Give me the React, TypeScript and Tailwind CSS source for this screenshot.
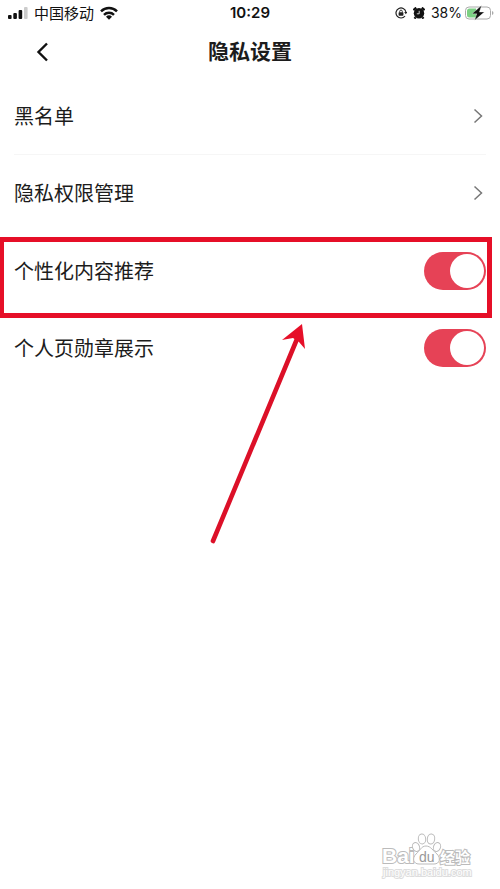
import { useState } from "react";

const FONT = "font-['Liberation_Sans','Noto_Sans_CJK_SC',sans-serif]";

function StatusBar() {
  return (
    <div className="grid h-[26px] grid-cols-[1fr_auto_1fr] items-center px-1.5 text-[#111]">
      <div className="flex items-center gap-1.5 pl-0.5">
        <svg className="h-3 w-5 shrink-0" viewBox="0 0 20 12">
          <rect x="0" y="8" width="3.6" height="4" rx="1" fill="#111" />
          <rect x="5.3" y="6" width="3.6" height="6" rx="1" fill="#111" />
          <rect x="10.6" y="3" width="3.6" height="9" rx="1" fill="#111" />
          <rect x="16" y="0" width="3.6" height="12" rx="1" fill="#ccc" />
        </svg>
        <span className="whitespace-nowrap pt-0.5 text-[15px] leading-5">中国移动</span>
        <svg className="h-3.5 w-[18px] shrink-0" viewBox="0 0 18 14">
          <g fill="none" stroke="#111" strokeWidth="2.5">
            <path d="M1 5.3a11.5 11.5 0 0 1 16 0" />
            <path d="M4 8.8a7.2 7.2 0 0 1 10 0" />
          </g>
          <path d="M6 10.7a4.3 4.3 0 0 1 6 0L9 13.7z" fill="#111" />
        </svg>
      </div>
      <span className="text-center font-['Inter',sans-serif] text-[15px] font-semibold leading-5">10:29</span>
      <div className="flex items-center justify-end gap-1.5">
        <svg className="h-3 w-3 shrink-0" viewBox="0 0 12 12">
          <path d="M10.9 5A5 5 0 1 0 10 9" fill="none" stroke="#222" strokeWidth="1.2" />
          <path d="M9.2 5h3.2l-1.6 2.3z" fill="#222" />
          <rect x="3.6" y="5.3" width="4.8" height="3.4" rx=".6" fill="#222" />
          <path d="M4.7 5.5V4.4a1.3 1.3 0 0 1 2.6 0v1.1" fill="none" stroke="#222" strokeWidth=".9" />
        </svg>
        <svg className="h-3 w-3 shrink-0" viewBox="0 0 12 12">
          <circle cx="6" cy="6.3" r="5.2" fill="#111" />
          <path d="M.4 3.2 3.2.6M11.6 3.2 8.8.6M2.6 10.2 1.5 11.6M9.4 10.2l1.1 1.4" stroke="#111" strokeWidth="2.2" />
          <path d="M6.2 3.8v3H3.8" fill="none" stroke="#fff" strokeWidth=".8" />
        </svg>
        <div className="flex items-center gap-0.5">
          <span className="font-['Inter',sans-serif] text-sm leading-5">38%</span>
          <svg className="h-4 w-[30px] shrink-0" viewBox="0 0 30 16">
            <rect x="1.5" y="2" width="25" height="12" rx="3.5" fill="#fff" stroke="#aaa" />
            <path d="M5.5 3.5H12v9H5.5a2.5 2.5 0 0 1-2.5-2.5V6a2.5 2.5 0 0 1 2.5-2.5z" fill="#7bd083" />
            <path d="M28 6v4q1.5-.6 1.5-2T28 6z" fill="#aaa" />
            <path d="M17.5.5 8 8.8h4.7l-2 6.5 9.6-8.2h-4.9z" fill="#111" stroke="#fff" strokeWidth=".3" />
          </svg>
        </div>
      </div>
    </div>
  );
}

function LinkRow({ label, divider }: { label: string; divider?: boolean }) {
  return (
    <li className="px-3.5">
      <a
        href="#"
        className={`flex h-[77px] items-center justify-between border-b ${divider ? "border-[#f6f6f6]" : "border-transparent"}`}
      >
        <span className="pt-0.5 text-xl">{label}</span>
        <svg className="mr-0.5 h-4 w-3" viewBox="0 0 12 16" fill="none" stroke="#777" strokeWidth="1.5">
          <path d="M2.5 1.5 9.5 8l-7 6.5" />
        </svg>
      </a>
    </li>
  );
}

function ToggleRow({ label, highlighted }: { label: string; highlighted?: boolean }) {
  const [on, setOn] = useState(true);

  return (
    <li className="relative">
      <label className="flex h-[77px] cursor-pointer items-center justify-between px-3.5">
        <span className="pt-0.5 text-xl">{label}</span>
        <input
          type="checkbox"
          role="switch"
          checked={on}
          onChange={(e) => setOn(e.target.checked)}
          className="peer sr-only"
        />
        <span className="flex h-[38px] w-[62px] items-center rounded-full bg-[#c9c9c9] px-0.5 peer-checked:justify-end peer-checked:bg-[#e64256]">
          <span className="h-[34px] w-[34px] rounded-full bg-white" />
        </span>
      </label>
      {highlighted && (
        <>
          <div className="pointer-events-none absolute -bottom-[9px] left-0 right-2 top-[5px] border-[5px] border-l-4 border-[#e60f28]" />
          <svg
            className="pointer-events-none absolute left-[42%] top-[92px] z-10 h-[222px] w-[100px]"
            viewBox="0 0 100 222"
          >
            <path d="M3 217 87 15" stroke="#dc1028" strokeWidth="4.6" strokeLinecap="round" />
            <path d="M92 0 95 25 89 18 83 14 72 16z" fill="#e60f28" />
          </svg>
        </>
      )}
    </li>
  );
}

function Watermark() {
  return (
    <svg
      className="h-[50px] w-24"
      viewBox="0 0 96 50"
      fill="#fff"
      stroke="#bbb"
      strokeWidth="1"
      fontFamily="Liberation Sans, Noto Sans CJK SC, sans-serif"
    >
      <text x="2" y="32" fontSize="21" fontWeight="bold" paintOrder="stroke" strokeWidth="2">Bai</text>
      <ellipse cx="36" cy="16" rx="3.5" ry="4.6" transform="rotate(-20 36 16)" />
      <ellipse cx="42" cy="8" rx="3.7" ry="5" transform="rotate(-5 42 8)" />
      <ellipse cx="51" cy="8" rx="3.7" ry="5" transform="rotate(8 51 8)" />
      <ellipse cx="57" cy="16" rx="3.5" ry="4.6" transform="rotate(20 57 16)" />
      <path d="M46 15c-5 0-6 5-10 8-4 4-3 10 3 10h15c6 0 7-6 3-10-4-3-6-8-11-8z" />
      <text x="39" y="31" fontSize="14" fill="#999" stroke="none">du</text>
      <text x="60" y="32" fontSize="15" fontWeight="bold" paintOrder="stroke" strokeWidth="2">经验</text>
      <text x="3" y="45" fontSize="11" paintOrder="stroke" stroke="#ddd" strokeWidth="2">
        jingyan.baidu.com
      </text>
    </svg>
  );
}

export default function App() {
  return (
    <div className={`flex min-h-screen flex-col bg-white text-[#1c1c1c] ${FONT}`}>
      <StatusBar />
      <header className="grid h-[51px] grid-cols-[49px_1fr_49px] items-center">
        <button type="button" aria-label="返回" className="flex justify-end">
          <svg className="h-5 w-3.5" viewBox="0 0 14 20" fill="none" stroke="#111" strokeWidth="2.4">
            <path d="M12 1.5 3.5 10l8.5 8.5" />
          </svg>
        </button>
        <h1 className="text-center text-[21px] font-bold">隐私设置</h1>
      </header>
      <ul className="pt-px">
        <LinkRow label="黑名单" divider />
        <LinkRow label="隐私权限管理" />
        <ToggleRow label="个性化内容推荐" highlighted />
        <ToggleRow label="个人页勋章展示" />
      </ul>
      <footer className="mt-auto flex justify-end pb-2 pr-6">
        <Watermark />
      </footer>
    </div>
  );
}
